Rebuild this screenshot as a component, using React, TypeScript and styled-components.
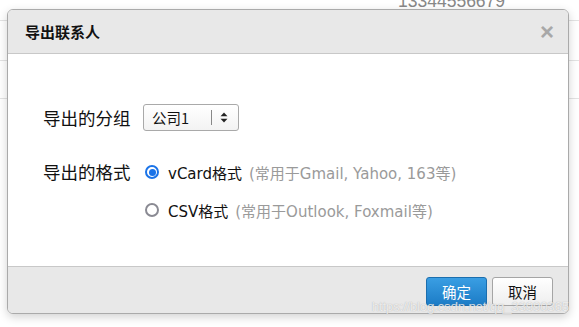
import React, { useState } from "react";
import styled, { createGlobalStyle } from "styled-components";

const GlobalStyle = createGlobalStyle`
  html, body {
    margin: 0;
    padding: 0;
    background: #fff;
    width: 579px;
    height: 327px;
    overflow: hidden;
  }
  body {
    font-family: "DejaVu Sans", "Noto Sans CJK SC", sans-serif;
  }
`;

const CJK = `"Noto Sans CJK SC", "DejaVu Sans", sans-serif`;

const formats = [
  { id: "vcard", name: "vCard格式", hint: "(常用于Gmail, Yahoo, 163等)" },
  { id: "csv", name: "CSV格式", hint: "(常用于Outlook, Foxmail等)" },
];

const App: React.FC = () => {
  const [format, setFormat] = useState("vcard");

  return (
    <Page>
      <GlobalStyle />
      <Backdrop>
        <BackRow $height={21}>
          <Phone>13344556679</Phone>
        </BackRow>
        <BackRow $height={40} />
        <BackRow $height={38} />
      </Backdrop>

      <Dialog>
        <Header>
          <Title>导出联系人</Title>
          <Close>×</Close>
        </Header>
        <Body>
          <Row>
            <Label>导出的分组</Label>
            <Select>
              <SelectText>公司1</SelectText>
              <SelectDivider />
              <svg width="8" height="11" viewBox="0 0 8 11">
                <path d="M4 0.5 L7.5 4.2 H0.5 Z" fill="#222" />
                <path d="M4 10.5 L7.5 6.8 H0.5 Z" fill="#222" />
              </svg>
            </Select>
          </Row>
          <Row $top>
            <Label>导出的格式</Label>
            <Options>
              {formats.map((f) => (
                <Option key={f.id} onClick={() => setFormat(f.id)}>
                  <Radio $checked={format === f.id} />
                  <OptionName>{f.name}</OptionName>
                  <Hint>{f.hint}</Hint>
                </Option>
              ))}
            </Options>
          </Row>
        </Body>
        <Footer>
          <Button $primary>确定</Button>
          <Button>取消</Button>
        </Footer>
      </Dialog>

      <Watermark>https://blog.csdn.net/qq_33990365</Watermark>
    </Page>
  );
};

const Page = styled.div`
  position: relative;
  width: 579px;
  height: 327px;
  overflow: hidden;
`;

const Backdrop = styled.div`
  display: flex;
  flex-direction: column;
`;

const BackRow = styled.div<{ $height: number }>`
  height: ${(p) => p.$height - 1}px;
  border-bottom: 1px solid #e3e3e3;
  position: relative;
`;

const Phone = styled.div`
  margin: -9px 0 0 398px;
  font-family: "Liberation Sans", Arial, sans-serif;
  font-size: 17.5px;
  line-height: 20px;
  color: #888;
`;

const Dialog = styled.div`
  position: absolute;
  left: 7px;
  top: 9px;
  width: 560px;
  height: 303px;
  border: 1px solid #aaa;
  border-radius: 6px;
  background: #fff;
  box-shadow: 0 3px 10px rgba(0, 0, 0, 0.18);
  display: flex;
  flex-direction: column;
  overflow: hidden;
`;

const Header = styled.div`
  height: 43px;
  flex: none;
  background: #e8e8e8;
  border-bottom: 1px solid #c8c8c8;
  display: flex;
  align-items: center;
  justify-content: space-between;
  padding: 0 14px 0 17px;
`;

const Title = styled.div`
  font-family: ${CJK};
  font-weight: bold;
  font-size: 15px;
  color: #111;
`;

const Close = styled.div`
  font-family: "Liberation Sans", Arial, sans-serif;
  font-size: 24px;
  font-weight: bold;
  line-height: 24px;
  color: #a8a8a8;
`;

const Body = styled.div`
  flex: 1;
  padding: 50px 0 0 35px;
  display: flex;
  flex-direction: column;
  gap: 29px;
`;

const Row = styled.div<{ $top?: boolean }>`
  display: flex;
  align-items: ${(p) => (p.$top ? "flex-start" : "center")};
`;

const Label = styled.div`
  width: 100px;
  flex: none;
  font-family: ${CJK};
  font-size: 17.5px;
  line-height: 24px;
  color: #111;
`;

const Select = styled.div`
  height: 25px;
  width: 76px;
  box-sizing: content-box;
  border: 1px solid #a9a9a9;
  border-radius: 3px;
  background: linear-gradient(#fff, #f3f3f3);
  display: flex;
  align-items: center;
  padding: 0 10px 0 8px;
`;

const SelectText = styled.span`
  font-family: ${CJK};
  font-size: 14.5px;
  color: #111;
  flex: 1;
`;

const SelectDivider = styled.span`
  width: 1px;
  height: 15px;
  background: #888;
  margin-right: 8px;
`;

const Options = styled.div`
  display: flex;
  flex-direction: column;
  gap: 14px;
`;

const Option = styled.div`
  display: flex;
  align-items: center;
  height: 24px;
  cursor: pointer;
`;

const Radio = styled.span<{ $checked: boolean }>`
  width: 14px;
  height: 14px;
  box-sizing: border-box;
  border-radius: 50%;
  margin: 0 9px 0 2px;
  border: 2px solid ${(p) => (p.$checked ? "#1a73e8" : "#8a8a93")};
  position: relative;
  &::after {
    content: "";
    display: ${(p) => (p.$checked ? "block" : "none")};
    position: absolute;
    left: 1.5px;
    top: 1.5px;
    width: 7px;
    height: 7px;
    border-radius: 50%;
    background: #1a73e8;
  }
`;

const OptionName = styled.span`
  font-size: 15px;
  color: #111;
  margin-right: 7px;
`;

const Hint = styled.span`
  font-size: 15px;
  color: #9a9a9a;
`;

const Footer = styled.div`
  height: 47px;
  flex: none;
  background: #e8e8e8;
  border-top: 1px solid #c8c8c8;
  display: flex;
  justify-content: flex-end;
  align-items: flex-start;
  gap: 5px;
  padding: 10px 15px 0 0;
  box-sizing: border-box;
`;

const Button = styled.button<{ $primary?: boolean }>`
  width: 61px;
  height: 29px;
  border-radius: 3px;
  font-family: ${CJK};
  font-size: 14.5px;
  cursor: pointer;
  padding: 0;
  border: 1px solid ${(p) => (p.$primary ? "#1b6eae" : "#a5a5a5")};
  color: ${(p) => (p.$primary ? "#fff" : "#111")};
  background: ${(p) =>
    p.$primary
      ? "linear-gradient(#3a9ee3, #1c7cc6)"
      : "linear-gradient(#ffffff, #eeeeee)"};
`;

const Watermark = styled.div`
  position: absolute;
  right: 10px;
  bottom: 13px;
  font-family: "Liberation Sans", Arial, sans-serif;
  font-size: 13.5px;
  letter-spacing: -0.3px;
  color: rgba(255, 255, 255, 0.75);
  text-shadow: 0 0 1px rgba(120, 120, 120, 0.6);
  pointer-events: none;
`;

export default App;
